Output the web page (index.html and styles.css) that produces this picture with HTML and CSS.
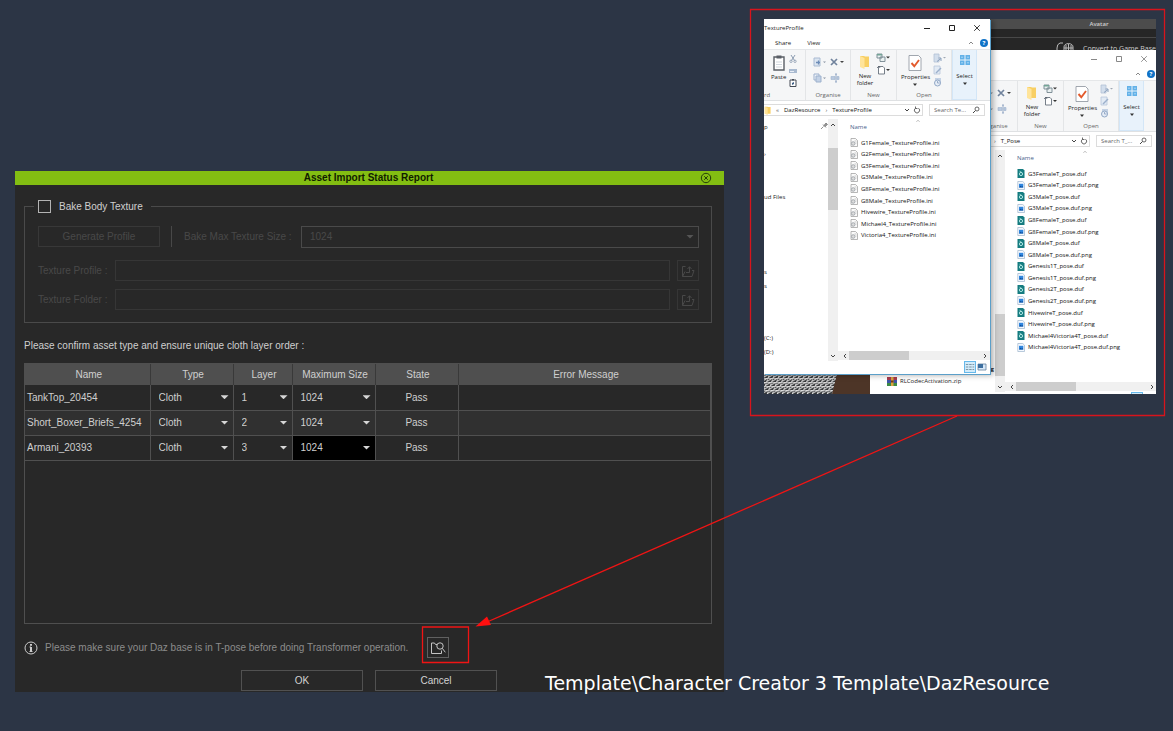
FILE: index.html
```html
<!DOCTYPE html>
<html lang="en">
<head>
<meta charset="utf-8">
<meta name="viewport" content="width=device-width, initial-scale=1">
<title>Asset Import Status Report</title>
<link rel="stylesheet" href="styles.css">
</head>
<body>
<svg class="sprite" aria-hidden="true">
  <symbol id="i-min" viewBox="0 0 8 8"><path d="M1 4.5h6" stroke="currentColor" fill="none"/></symbol>
  <symbol id="i-max" viewBox="0 0 8 8"><path d="M1.5 1.500h5v5h-5z" stroke="currentColor" fill="none"/></symbol>
  <symbol id="i-x" viewBox="0 0 8 8"><path d="M1.200 1.200l5.600 5.600M6.800 1.200L1.200 6.800" stroke="currentColor" stroke-width=".9" fill="none"/></symbol>
  <symbol id="i-up" viewBox="0 0 8 8"><path d="M2 5l2-2 2 2" stroke="currentColor" fill="none"/></symbol>
  <symbol id="i-down" viewBox="0 0 8 8"><path d="M2 3l2 2 2-2" stroke="currentColor" fill="none"/></symbol>
  <symbol id="i-left" viewBox="0 0 8 8"><path d="M5 2L3 4l2 2" stroke="currentColor" fill="none"/></symbol>
  <symbol id="i-right" viewBox="0 0 8 8"><path d="M3 2l2 2-2 2" stroke="currentColor" fill="none"/></symbol>
  <symbol id="i-paste" viewBox="0 0 14 16"><path d="M2 2h10v13H2z" fill="#fff" stroke="#5a5f66" stroke-width="1.400"/><path d="M4.500 .5h5v3h-5z" fill="#5a5f66"/><path d="M4 7h6M4 9.500h6M4 12h6" stroke="#bcc6d0" stroke-width=".7"/></symbol>
  <symbol id="i-cut" viewBox="0 0 8 8"><path d="M2 0l3.500 5.500M6 0L2.500 5.500" stroke="#8b9bb0" fill="none"/><circle cx="2" cy="6.300" r="1.200" fill="none" stroke="#8b9bb0" stroke-width=".8"/><circle cx="6" cy="6.300" r="1.200" fill="none" stroke="#8b9bb0" stroke-width=".8"/></symbol>
  <symbol id="i-path" viewBox="0 0 8 8"><path d="M0 2h8v4H0z" fill="#a9bad0"/><path d="M1 4.500h4" stroke="#e8eef6"/></symbol>
  <symbol id="i-clip" viewBox="0 0 8 8"><path d="M1 1h6v6.500H1z" fill="#fff" stroke="#444b55"/><path d="M3 0h2v1.500H3z" fill="#444b55"/><path d="M3 6V4l2-1v2z" fill="#3d5f86"/></symbol>
  <symbol id="i-move" viewBox="0 0 14 10"><path d="M1 1h6v8H1z" fill="#dbe5f1" stroke="#aabbd2"/><path d="M3 5.500h4M5.500 3.500v4" stroke="#6d8db8" stroke-width="1.300"/><path d="M10 4.500h3l-1.500 1.500z" fill="#8b96a4"/></symbol>
  <symbol id="i-copy" viewBox="0 0 14 10"><path d="M1 1h5v6H1z" fill="#eef3f9" stroke="#9db1cd"/><path d="M3 3h5v6H3z" fill="#c3d2e6" stroke="#9db1cd"/><path d="M10 4.500h3l-1.500 1.500z" fill="#8b96a4"/></symbol>
  <symbol id="i-delete" viewBox="0 0 14 10"><path d="M1 2l6 6M7 2L1 8" stroke="#71839d" stroke-width="1.700"/><path d="M10 4h4l-2 2z" fill="#444"/></symbol>
  <symbol id="i-rename" viewBox="0 0 14 10"><path d="M1 3.500h4v3H1zM7 3.500h2v3H7z" fill="#b9c9df" stroke="#9fb3cf" stroke-width=".6"/><path d="M6 1v8M5 1h2M5 9h2" stroke="#8199bb" stroke-width=".8"/></symbol>
  <symbol id="i-folder" viewBox="0 0 10 14"><path d="M0 1h4l1 .5h4v10.500H0z" fill="#f8cf63"/><path d="M0 1l4.500 2v11L0 12z" fill="#ffe49a"/></symbol>
  <symbol id="i-newitem" viewBox="0 0 14 10"><path d="M1 1h5v4H1zM4 4h5v4.500H4z" fill="#eaf1f1" stroke="#75868f" stroke-width=".9"/><path d="M1 1h5v1.500H1z" fill="#74a596"/><path d="M10 3.500h4l-2 2z" fill="#333"/></symbol>
  <symbol id="i-easy" viewBox="0 0 14 10"><path d="M2.500 2v7h6V3L7 1.500H2.500" fill="#fff" stroke="#66707c" stroke-width=".9"/><path d="M1 3l2-2 1 2" fill="none" stroke="#46505c" stroke-width=".7"/><path d="M10 4h4l-2 2z" fill="#333"/></symbol>
  <symbol id="i-props" viewBox="0 0 14 16"><path d="M1 .5h9.500l2.500 2.500v12.500H1z" fill="#fff" stroke="#8a929c" stroke-width=".8"/><path d="M3.500 8l2.800 3.200L11 5" stroke="#e35a2c" stroke-width="1.900" fill="none"/></symbol>
  <symbol id="i-open" viewBox="0 0 14 10"><path d="M1 1h5v8H1z" fill="#d3deec" stroke="#b2c1d6" stroke-width=".8"/><path d="M4 8.500l4-3M5.500 5H8v3" stroke="#8aa0bd" fill="none"/><path d="M10 4h3l-1.500 1.500z" fill="#a0a8b3"/></symbol>
  <symbol id="i-edit" viewBox="0 0 14 10"><path d="M1 1h6v8H1z" fill="#e2eaf4" stroke="#b8c6da" stroke-width=".8"/><path d="M3 8l5-5" stroke="#9cb0cb" stroke-width="1.500"/></symbol>
  <symbol id="i-history" viewBox="0 0 14 10"><path d="M2 1h6v5H2z" fill="#c4d2e5"/><circle cx="4.500" cy="6" r="3" fill="#e6edf6" stroke="#92a8c6"/><path d="M4.500 4v2h2" stroke="#7e97ba" fill="none" stroke-width=".7"/></symbol>
  <symbol id="i-select" viewBox="0 0 12 12"><path d="M1 1h4.500v4.500H1zM6.500 1H11v4.500H6.500zM1 6.500h4.500V11H1zM6.500 6.500H11V11H6.500z" fill="#62b1e8"/><path d="M2 3.200h2M8 3.200h2M2 8.800h2M8 8.800h2" stroke="#a9d6f6"/></symbol>
  <symbol id="i-caret" viewBox="0 0 6 4"><path d="M1 .5h4L3 3z" fill="#333"/></symbol>
  <symbol id="i-refresh" viewBox="0 0 8 8"><path d="M2.500 2.200A2.600 2.600 0 1 0 5.500 2.200M2.500 .500v2h2" stroke="#444" stroke-width=".8" fill="none"/></symbol>
  <symbol id="i-search" viewBox="0 0 8 8"><circle cx="5" cy="3" r="2" stroke="#444" stroke-width=".8" fill="none"/><path d="M3.500 4.500L1 7" stroke="#444"/></symbol>
  <symbol id="i-ini" viewBox="0 0 8 9"><path d="M1 .500h4.500l2 2v6H1z" fill="#fafafa" stroke="#999" stroke-width=".7"/><circle cx="3.200" cy="5.500" r="1.800" fill="#ddd" stroke="#8c949b" stroke-width=".7"/><path d="M4.500 3h2M5.500 5h1" stroke="#aaa" stroke-width=".6"/></symbol>
  <symbol id="i-duf" viewBox="0 0 8 9"><path d="M.5 0h5.500l1.500 1.500V9H.5z" fill="#157c80"/><circle cx="4" cy="5" r="1.600" fill="none" stroke="#bdf0ec" stroke-width=".9"/><path d="M2.500 2.200l2 1" stroke="#bdf0ec" stroke-width=".7"/></symbol>
  <symbol id="i-png" viewBox="0 0 8 9"><path d="M.8 .500h5l1.700 1.700v6.300H.8z" fill="#f4f9ff" stroke="#9db4cc" stroke-width=".7"/><path d="M2 2.800h4.300v3.700H2z" fill="#2f86df"/><path d="M2 6.500l1.500-1.800 1.200 1 .8-.7 .8 1.500z" fill="#0c4f9e"/></symbol>
  <symbol id="i-import" viewBox="0 0 14 14"><path d="M4.500 2.500H1.500v10h9.500l2-6h-2M1.500 12.500l2.500-5" stroke="currentColor" fill="none"/><path d="M5 8.500h3.500V3M6.500 5l2-2.300 2 2.300" stroke="currentColor" fill="none"/></symbol>
</svg>

<main class="stage">
  <section class="dialog" aria-labelledby="dialog-title">
    <header class="dialog-bar">
      <h1 id="dialog-title">Asset Import Status Report</h1>
      <button class="dialog-close" aria-label="Close"><svg viewBox="0 0 12 12"><circle cx="6" cy="6" r="4.700"/><path d="M4.200 4.200l3.600 3.600M7.800 4.200L4.200 7.800"/></svg></button>
    </header>
    <div class="dialog-body">
      <fieldset class="bake">
        <legend><input type="checkbox" id="bake"><label for="bake">Bake Body Texture</label></legend>
        <div class="bake-row">
          <button class="btn" disabled>Generate Profile</button>
          <span class="rule"></span>
          <label class="size-label" for="max-size">Bake Max Texture Size :</label>
          <span class="pick pick-wide"><select id="max-size" disabled><option>1024</option></select></span>
        </div>
        <div class="bake-row path-row">
          <label for="profile">Texture Profile :</label>
          <input type="text" id="profile" disabled>
          <button class="square" disabled aria-label="Browse texture profile"><svg><use href="#i-import"/></svg></button>
        </div>
        <div class="bake-row path-row">
          <label for="folder">Texture Folder :</label>
          <input type="text" id="folder" disabled>
          <button class="square" disabled aria-label="Browse texture folder"><svg><use href="#i-import"/></svg></button>
        </div>
      </fieldset>
      <p class="confirm">Please confirm asset type and ensure unique cloth layer order :</p>
      <div class="assets">
        <table>
          <colgroup><col class="c-name"><col class="c-type"><col class="c-layer"><col class="c-size"><col class="c-state"><col></colgroup>
          <thead><tr><th>Name</th><th>Type</th><th>Layer</th><th>Maximum Size</th><th>State</th><th>Error Message</th></tr></thead>
          <tbody>
            <tr><td>TankTop_20454</td><td><span class="pick"><select aria-label="Type"><option>Cloth</option></select></span></td><td><span class="pick"><select aria-label="Layer"><option>1</option></select></span></td><td><span class="pick"><select aria-label="Maximum size"><option>1024</option></select></span></td><td class="state">Pass</td><td></td></tr>
            <tr><td>Short_Boxer_Briefs_4254</td><td><span class="pick"><select aria-label="Type"><option>Cloth</option></select></span></td><td><span class="pick"><select aria-label="Layer"><option>2</option></select></span></td><td><span class="pick"><select aria-label="Maximum size"><option>1024</option></select></span></td><td class="state">Pass</td><td></td></tr>
            <tr><td>Armani_20393</td><td><span class="pick"><select aria-label="Type"><option>Cloth</option></select></span></td><td><span class="pick"><select aria-label="Layer"><option>3</option></select></span></td><td class="active"><span class="pick"><select aria-label="Maximum size"><option>1024</option></select></span></td><td class="state">Pass</td><td></td></tr>
          </tbody>
        </table>
      </div>
      <div class="hint">
        <svg class="info" viewBox="0 0 14 14"><circle cx="7" cy="7" r="6"/><path class="stem" d="M7 3v1.800M7 6v4.500"/><path d="M5.500 6h1.500M5.500 10.500h3"/></svg>
        <span>Please make sure your Daz base is in T-pose before doing Transformer operation.</span>
        <button class="square find" aria-label="Open template folder"><svg viewBox="0 0 16 14"><path d="M7 3.500H5.500L4.500 2H1.500v10.500h10V9.500"/><circle cx="10" cy="5" r="3.200"/><path d="M12.300 7.300l3 4"/></svg></button>
      </div>
      <div class="actions"><button class="btn">OK</button><button class="btn">Cancel</button></div>
    </div>
  </section>

  <section class="desktop">
    <div class="app-strip">
      <div class="app-title">Avatar</div>
      <div class="app-tool"><svg viewBox="0 0 18 12"><path d="M7 1H4Q1 2 1 6v6M8 12V5q0-3 4.500-3.500Q17 2 17 5v7M8 6h9M8 9h9M12.500 2v10M10 3v9M15 3v9"/></svg><span>Convert to Game Base</span></div>
    </div>
    <div class="viewport3d">
      <svg viewBox="0 0 106 20" preserveAspectRatio="none"><defs><pattern id="mesh" width="5" height="4" patternUnits="userSpaceOnUse" patternTransform="skewX(-20)"><path d="M0 0h5M0 0v4M0 4l5-4" stroke="#e4e4e4" stroke-width="1.100" fill="none"/></pattern></defs><path d="M0 0h106v20H0z" fill="#4d3527"/><path d="M0 0h73l-5 20H0z" fill="#343638"/><path d="M0 0h73l-5 20H0z" fill="url(#mesh)"/></svg>
    </div>

    <article class="explorer explorer-back">
      <header class="ex-title"><span></span><div class="ex-controls"><button aria-label="Minimise"><svg><use href="#i-min"/></svg></button><button aria-label="Maximise"><svg><use href="#i-max"/></svg></button><button aria-label="Close"><svg><use href="#i-x"/></svg></button></div></header>
      <nav class="ex-tabs"><span class="ex-help"><svg><use href="#i-up"/></svg><b>?</b></span></nav>
      <div class="ribbon">
        <div class="group g-clip"></div>
        <div class="group g-org"><div class="tools"><div class="minis"><svg class="m"><use href="#i-move"/></svg><svg class="m"><use href="#i-copy"/></svg></div><div class="minis"><svg class="m"><use href="#i-delete"/></svg><svg class="m"><use href="#i-rename"/></svg></div></div><small>Organise</small></div>
        <div class="group g-new"><div class="tools"><button class="big"><svg class="folder"><use href="#i-folder"/></svg>New<br>folder</button><div class="minis tight"><svg class="m"><use href="#i-newitem"/></svg><svg class="m"><use href="#i-easy"/></svg></div></div><small>New</small></div>
        <div class="group g-open"><div class="tools"><button class="big"><svg class="sheet"><use href="#i-props"/></svg>Properties<svg class="caret"><use href="#i-caret"/></svg></button><div class="minis tight"><svg class="m"><use href="#i-open"/></svg><svg class="m"><use href="#i-edit"/></svg><svg class="m"><use href="#i-history"/></svg></div></div><small>Open</small></div>
        <div class="group g-select"><button class="big"><span class="tile"><svg><use href="#i-select"/></svg></span>Select<svg class="caret"><use href="#i-caret"/></svg></button></div>
      </div>
      <div class="address"><div class="crumbs"><svg class="folder"><use href="#i-folder"/></svg><span class="crumb-path crumb-deep"><i>›</i> T_Pose</span><svg><use href="#i-down"/></svg><svg class="refresh"><use href="#i-refresh"/></svg></div><label class="find-box"><input type="text" placeholder="Search T_..." aria-label="Search T_Pose"><svg><use href="#i-search"/></svg></label></div>
      <div class="panes">
        <div class="tree"></div>
        <div class="vbar"><svg><use href="#i-up"/></svg><span class="track thumb-end"><span></span></span><svg><use href="#i-down"/></svg></div>
        <div class="files">
          <div class="files-head"><svg><use href="#i-up"/></svg>Name</div>
          <ul class="rows-16">
            <li><svg><use href="#i-duf"/></svg>G3FemaleT_pose.duf</li>
            <li><svg><use href="#i-png"/></svg>G3FemaleT_pose.duf.png</li>
            <li><svg><use href="#i-duf"/></svg>G3MaleT_pose.duf</li>
            <li><svg><use href="#i-png"/></svg>G3MaleT_pose.duf.png</li>
            <li><svg><use href="#i-duf"/></svg>G8FemaleT_pose.duf</li>
            <li><svg><use href="#i-png"/></svg>G8FemaleT_pose.duf.png</li>
            <li><svg><use href="#i-duf"/></svg>G8MaleT_pose.duf</li>
            <li><svg><use href="#i-png"/></svg>G8MaleT_pose.duf.png</li>
            <li><svg><use href="#i-duf"/></svg>Genesis1T_pose.duf</li>
            <li><svg><use href="#i-png"/></svg>Genesis1T_pose.duf.png</li>
            <li><svg><use href="#i-duf"/></svg>Genesis2T_pose.duf</li>
            <li><svg><use href="#i-png"/></svg>Genesis2T_pose.duf.png</li>
            <li><svg><use href="#i-duf"/></svg>HivewireT_pose.duf</li>
            <li><svg><use href="#i-png"/></svg>HivewireT_pose.duf.png</li>
            <li><svg><use href="#i-duf"/></svg>Michael4Victoria4T_pose.duf</li>
            <li><svg><use href="#i-png"/></svg>Michael4Victoria4T_pose.duf.png</li>
          </ul>
          <div class="hbar"><svg><use href="#i-left"/></svg><span class="track"><span></span></span><svg><use href="#i-right"/></svg></div>
        </div>
      </div>
      <footer class="ex-status"><span class="view on"></span><span class="view"></span></footer>
    </article>

    <div class="archive"><span class="archive-tail">g</span><div class="archive-row"><svg viewBox="0 0 10 9"><path d="M0 0h10v3H0z" fill="#a83a4e"/><path d="M0 3h10v3H0z" fill="#3d56a8"/><path d="M0 6h10v3H0z" fill="#3c8a45"/><path d="M4 0h2.500v9H4z" fill="#d9a441"/><path d="M4 3.500h2.500v2H4z" fill="#7a3b12"/></svg>RLCodecActivation.zip</div></div>

    <article class="explorer explorer-front">
      <header class="ex-title"><span>TextureProfile</span><div class="ex-controls"><button aria-label="Minimise"><svg><use href="#i-min"/></svg></button><button aria-label="Maximise"><svg><use href="#i-max"/></svg></button><button aria-label="Close"><svg><use href="#i-x"/></svg></button></div></header>
      <nav class="ex-tabs"><a href="#">Share</a><a href="#">View</a><span class="ex-help"><svg><use href="#i-up"/></svg><b>?</b></span></nav>
      <div class="ribbon">
        <div class="group g-clip"><div class="tools"><button class="big"><svg class="sheet"><use href="#i-paste"/></svg>Paste</button><div class="minis small"><svg><use href="#i-cut"/></svg><svg><use href="#i-path"/></svg><svg><use href="#i-clip"/></svg></div></div><small>rd</small></div>
        <div class="group g-org"><div class="tools"><div class="minis"><svg class="m"><use href="#i-move"/></svg><svg class="m"><use href="#i-copy"/></svg></div><div class="minis"><svg class="m"><use href="#i-delete"/></svg><svg class="m"><use href="#i-rename"/></svg></div></div><small>Organise</small></div>
        <div class="group g-new"><div class="tools"><button class="big"><svg class="folder"><use href="#i-folder"/></svg>New<br>folder</button><div class="minis tight"><svg class="m"><use href="#i-newitem"/></svg><svg class="m"><use href="#i-easy"/></svg></div></div><small>New</small></div>
        <div class="group g-open"><div class="tools"><button class="big"><svg class="sheet"><use href="#i-props"/></svg>Properties<svg class="caret"><use href="#i-caret"/></svg></button><div class="minis tight"><svg class="m"><use href="#i-open"/></svg><svg class="m"><use href="#i-edit"/></svg><svg class="m"><use href="#i-history"/></svg></div></div><small>Open</small></div>
        <div class="group g-select"><button class="big"><span class="tile"><svg><use href="#i-select"/></svg></span>Select<svg class="caret"><use href="#i-caret"/></svg></button></div>
      </div>
      <div class="address"><div class="crumbs"><svg class="folder"><use href="#i-folder"/></svg><span class="crumb-path"><i>«</i><span>DazResource</span><i>›</i><span>TextureProfile</span></span><svg><use href="#i-down"/></svg><svg class="refresh"><use href="#i-refresh"/></svg></div><label class="find-box"><input type="text" placeholder="Search Te..." aria-label="Search TextureProfile"><svg><use href="#i-search"/></svg></label></div>
      <div class="panes">
        <div class="tree">
          <span class="tree-item t-pin">p<svg viewBox="0 0 8 8"><path d="M1 7l2.500-2.500M3 2.500l3 3M4 3.500l2-2.500 1.500 1.500L5 4.500z" stroke="#777" fill="#999" stroke-width=".8"/></svg></span>
          <span class="tree-item t-a">›</span>
          <span class="tree-item t-cloud">ud Files</span>
          <span class="tree-item t-s">s</span>
          <span class="tree-item t-e">s</span>
          <span class="tree-item t-c">(C:)</span>
          <span class="tree-item t-d">(D:)</span>
        </div>
        <div class="vbar"><svg><use href="#i-up"/></svg><span class="track thumb-start"><span></span></span><svg><use href="#i-down"/></svg></div>
        <div class="files">
          <div class="files-head"><svg><use href="#i-up"/></svg>Name</div>
          <ul class="rows-9">
            <li><svg><use href="#i-ini"/></svg>G1Female_TextureProfile.ini</li>
            <li><svg><use href="#i-ini"/></svg>G2Female_TextureProfile.ini</li>
            <li><svg><use href="#i-ini"/></svg>G3Female_TextureProfile.ini</li>
            <li><svg><use href="#i-ini"/></svg>G3Male_TextureProfile.ini</li>
            <li><svg><use href="#i-ini"/></svg>G8Female_TextureProfile.ini</li>
            <li><svg><use href="#i-ini"/></svg>G8Male_TextureProfile.ini</li>
            <li><svg><use href="#i-ini"/></svg>Hivewire_TextureProfile.ini</li>
            <li><svg><use href="#i-ini"/></svg>Michael4_TextureProfile.ini</li>
            <li><svg><use href="#i-ini"/></svg>Victoria4_TextureProfile.ini</li>
          </ul>
          <div class="hbar"><svg><use href="#i-left"/></svg><span class="track"><span></span></span><svg><use href="#i-right"/></svg></div>
        </div>
      </div>
      <footer class="ex-status"><span class="view on"><svg viewBox="0 0 12 12"><path d="M1 3h3M5 3h3M9 3h2M1 6h3M5 6h3M9 6h2M1 9h3M5 9h3M9 9h2" stroke="#6b8494"/></svg></span><span class="view"><svg viewBox="0 0 12 12"><path d="M2 3h8v6H2z" fill="#d7e8f8" stroke="#66809c" stroke-width=".8"/><path d="M2 3h5v4H2z" fill="#3d6f9f"/></svg></span></footer>
    </article>
  </section>

  <svg class="marks" viewBox="0 0 1173 731" aria-hidden="true">
    <path class="frame" d="M750.500 9.500h414v406h-414z"/>
    <path class="spot" d="M422.500 627h46v35.500h-46z"/>
    <path class="spot" d="M957 416L487 622"/>
    <path class="head" d="M475.500 626.500l11.500-10 4 8.500z"/>
  </svg>
  <p class="caption">Template\Character Creator 3 Template\DazResource</p>
</main>
</body>
</html>
```
FILE: styles.css
```css
* { box-sizing: border-box; }
body { margin: 0; background: #2c3545; font-family: "Liberation Sans", Arial, sans-serif; font-size: 10px; color: #cfcfcf; }
button, input, select { font: inherit; color: inherit; margin: 0; padding: 0; border: 0; border-radius: 0; background: none; }
ul { list-style: none; margin: 0; padding: 0; }
a { color: inherit; text-decoration: none; }
svg { display: block; flex: none; }
.sprite { position: absolute; width: 0; height: 0; }
.stage { position: relative; min-height: 100vh; overflow: hidden; }

/* Import dialog */
.dialog { position: absolute; left: 15px; top: 171px; width: 709px; background: #282828; }
.dialog-bar { display: flex; align-items: center; height: 14px; padding: 0 12px; background: #83be12; color: #111c00; }
.dialog-bar h1 { flex: 1; margin: 0; padding-left: 10px; font-size: 10px; line-height: 12px; text-align: center; }
.dialog-close svg { width: 12px; height: 12px; fill: none; stroke: #26400a; }
.dialog-body { display: flex; flex-direction: column; padding: 14px 12px 0 9px; }
.bake { margin: 0; padding: 12px 12px 12px 13px; border: 1px solid #4a4a4a; min-width: 0; display: flex; flex-direction: column; gap: 8px; }
.bake legend { display: flex; align-items: center; gap: 8px; padding: 0 8px 0 4px; margin-left: -4px; height: 15px; }
.bake input[type=checkbox] { appearance: none; width: 13px; height: 13px; border: 1px solid #b4b4b4; }
.bake-row { display: flex; align-items: center; height: 21px; color: #484848; }
.bake-row .btn { color: #484848; border-color: #383838; }
.rule { width: 1px; height: 21px; margin: 0 12px 0 11px; background: #484848; }
.btn { width: 122px; height: 21px; border: 1px solid #515151; color: #d2d2d2; }
.pick { position: relative; display: flex; flex: 1; }
.pick select { appearance: none; width: 100%; height: 20px; padding: 0 8px; opacity: 1; }
.pick::after { content: ""; position: absolute; right: 4px; top: 8px; width: 8px; height: 4px; background: #d6d6d6; clip-path: polygon(0 0, 100% 0, 50% 100%); pointer-events: none; }
.size-label { width: 117px; white-space: nowrap; }
.pick-wide { border: 1px solid #4a4a4a; }
.pick-wide::after { background: #555; }
.path-row label { width: 77px; }
.path-row:nth-of-type(2) { margin-top: 5px; }
.path-row input { flex: 1; height: 21px; border: 1px solid #363636; margin-right: 7px; }
.square { width: 22px; height: 21px; display: grid; place-items: center; border: 1px solid #363636; color: #484848; }
.square svg { width: 14px; height: 14px; }
.confirm { margin: 17px 0 11px; line-height: 12px; }
.assets { height: 261px; border: 1px solid #4f4f4f; }
table { width: 100%; border-collapse: collapse; table-layout: fixed; }
.c-name { width: 125px; } .c-type { width: 83px; } .c-layer { width: 59px; } .c-size { width: 83px; } .c-state { width: 83px; }
th { height: 21px; padding: 0 0 0 3px; background: #4f4f4f; font-weight: normal; border-right: 1px solid #393939; }
th:last-child { border-right: 0; }
td { height: 25px; padding: 0 2px; border: 1px solid #505050; border-left: 0; border-top: 0; white-space: nowrap; }
tr:nth-child(2) td { background: #303030; }
td .pick { margin: 0 -2px; }
td .pick::after { top: 8px; }
tr td.active { background: #000; }
td.state { text-align: center; }
.hint { display: flex; align-items: center; height: 21px; margin-top: 13px; color: #8c8c8c; }
.info { width: 14px; height: 14px; margin-right: 7px; fill: none; stroke: #ccc; stroke-width: 1; }
.info .stem { stroke-width: 2; }
.find { margin-left: 19px; border-color: #606060; }
.find svg { width: 16px; height: 14px; fill: none; stroke: #c4c4c4; }
.actions { display: flex; gap: 12px; margin-top: 12px; padding: 0 0 1px 217px; }

/* Desktop capture */
.desktop { position: absolute; left: 764px; top: 19px; width: 392px; height: 375px; overflow: hidden; background: #262626; color: #222; font-family: "Open Sans", "Noto Sans", sans-serif; font-size: 6px; line-height: 8px; }
.app-strip { margin-left: 226px; color: #ccc; }
.app-title { height: 10px; padding-right: 8px; background: #4c4c4c; text-align: center; line-height: 10px; padding-left: 60px; font-weight: 600; }
.app-tool { display: flex; justify-content: flex-end; gap: 9px; margin-top: 8px; padding-top: 4px; border-top: 1px solid #484848; }
.app-tool svg { width: 18px; height: 12px; fill: none; stroke: #bbb; }
.app-tool span { font-size: 7px; line-height: 14px; }
.viewport3d { position: absolute; left: 0; bottom: 0; width: 106px; height: 20px; }
.viewport3d svg { width: 100%; height: 100%; }
.explorer { position: absolute; display: flex; flex-direction: column; width: 226px; height: 355px; background: #fff; }
.explorer-front { left: 0; top: 0; box-shadow: 1px 1px 0 #5b9fc9, 3px 1px 6px rgba(0, 0, 0, .35); }
.explorer-back { left: 167px; top: 31px; }
.ex-title { display: flex; justify-content: space-between; height: 17px; line-height: 18px; }
.ex-controls { display: flex; align-items: center; gap: 17px; padding-right: 9px; color: #222; }
.ex-controls svg { width: 8px; height: 8px; }
.explorer-back .ex-controls { color: #888; }
.ex-tabs { display: flex; gap: 16px; height: 13px; padding-left: 11px; line-height: 14px; }
.ex-help { display: flex; align-items: center; gap: 5px; margin-left: auto; padding-right: 2px; color: #888; }
.ex-help svg { width: 8px; height: 8px; }
.ex-help b { width: 8px; height: 8px; border-radius: 50%; background: #1173c7; color: #fff; text-align: center; line-height: 8px; }
.ribbon { display: flex; height: 52px; background: #f5f6f7; border-top: 1px solid #e5e7e9; border-bottom: 1px solid #dfe1e3; }
.group { display: flex; flex-direction: column; justify-content: space-between; border-right: 1px solid #e3e5e7; overflow: hidden; }
.group small { font-size: 6px; line-height: 9px; color: #666; text-align: center; }
.g-clip { width: 42px; } .g-clip .tools { justify-content: flex-start; padding-left: 7px; } .g-clip small { text-align: left; }
.g-org { width: 45px; } .g-new { width: 46px; } .g-open { width: 55px; }
.tools { display: flex; justify-content: center; gap: 3px; padding-top: 5px; }
.big { display: flex; flex-direction: column; align-items: center; line-height: 7px; text-align: center; }
.sheet { width: 14px; height: 16px; margin-bottom: 3px; }
.folder { width: 10px; height: 14px; margin-bottom: 4px; }
.caret { width: 6px; height: 4px; margin-top: 2px; }
.minis { display: flex; flex-direction: column; gap: 6px; padding-top: 2px; }
.m { width: 14px; height: 10px; }
.tight { gap: 2px; padding-top: 0; margin-top: -2px; }
.small { gap: 4px; padding-top: 0; }
.small svg { width: 8px; height: 8px; }
.g-select { width: 25px; background: #e8f2fb; border: 1px solid #d3e6f7; border-top: 0; align-items: center; }
.tile { display: grid; place-items: center; width: 20px; height: 20px; margin-bottom: 3px; }
.tile svg { width: 12px; height: 12px; }
.address { display: flex; gap: 6px; padding: 3px 5px 3px 0; height: 18px; }
.crumbs { display: flex; align-items: center; flex: 1; min-width: 0; border: 1px solid #dcdcdc; border-left: 0; }
.crumbs svg { width: 8px; height: 8px; color: #444; }
.crumbs .folder { width: 8px; height: 9px; margin: 0; }
.crumbs .refresh { margin: 0 1px 0 2px; }
.crumb-path { display: flex; flex: 1; gap: 5px; padding-left: 4px; color: #111; }
.crumb-path i { font-style: normal; color: #555; }
.crumb-deep { padding-left: 55px; }
.find-box { display: flex; align-items: center; width: 56px; padding: 0 4px; border: 1px solid #dcdcdc; }
.find-box input { flex: 1; min-width: 0; height: 10px; }
.find-box input::placeholder { color: #666; opacity: 1; }
.find-box svg { width: 8px; height: 8px; }
.panes { display: flex; flex: 1; min-height: 0; }
.tree { display: flex; flex-direction: column; width: 64px; padding-top: 3px; }
.tree-item { height: 10px; line-height: 10px; }
.t-pin { display: flex; justify-content: space-between; } .t-pin svg { width: 8px; height: 8px; }
.t-a { margin-top: 17px; } .t-cloud { margin-top: 33px; } .t-s { margin-top: 65px; } .t-e { margin-top: 4px; } .t-c { margin-top: 42px; } .t-d { margin-top: 4px; }
.vbar { display: flex; flex-direction: column; align-items: center; width: 10px; padding: 2px 0 1px; background: #f0f0f0; color: #444; }
.vbar svg, .hbar svg { width: 8px; height: 8px; }
.track { display: flex; flex: 1; align-self: stretch; }
.vbar .track { flex-direction: column; }
.track span { background: #cdcdcd; }
.vbar .track span { height: 62px; }
.thumb-start { padding-top: 19px; }
.thumb-end { justify-content: flex-end; padding-bottom: 7px; }
.files { display: flex; flex-direction: column; flex: 1; min-width: 0; }
.files-head { padding-left: 12px; color: #48618a; line-height: 9px; margin-bottom: 5px; }
.files-head svg { width: 8px; height: 6px; margin: -1px 0 -1px 64px; color: #999; }
.files ul { display: grid; grid-auto-rows: 1fr; padding-left: 12px; }
.files li { display: flex; align-items: center; gap: 3px; color: #111; white-space: nowrap; }
.files li svg { width: 8px; height: 9px; }
.rows-9 { height: 104px; }
.rows-16 { height: 185px; }
.hbar { display: flex; align-items: center; height: 9px; margin: auto 0 1px; padding: 0 1px 0 3px; background: #f0f0f0; color: #444; }
.hbar .track span { width: 60px; }
.ex-status { display: flex; justify-content: flex-end; height: 13px; padding-right: 2px; }
.view { width: 12px; height: 12px; }
.view.on { background: #d2ebfa; border: 1px solid #66b8ea; }
.view svg { width: 100%; height: 100%; }
.archive { position: absolute; left: 106px; bottom: 0; width: 124px; height: 30px; padding-left: 17px; background: #fff; }
.archive-tail { display: block; text-align: right; font-weight: 700; line-height: 10px; color: #222; }
.archive-row { display: flex; align-items: center; gap: 3px; height: 14px; }
.archive-row svg { width: 10px; height: 9px; }

/* Annotations */
.marks { position: absolute; left: 0; top: 0; width: 1173px; height: 731px; pointer-events: none; }
.frame, .spot { fill: none; stroke: #f01414; stroke-width: 1.3; }
.frame { stroke: #d8141c; }
.head { fill: #ff0f0f; }
.caption { position: absolute; left: 545px; top: 671px; margin: 0; color: #fff; font-family: "DejaVu Sans", Verdana, sans-serif; font-size: 19px; line-height: 24px; white-space: nowrap; }
```
